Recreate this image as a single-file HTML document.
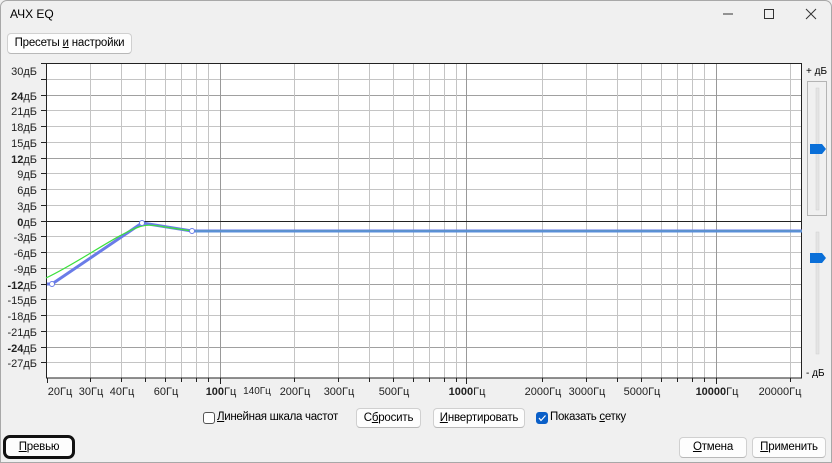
<!DOCTYPE html>
<html><head><meta charset="utf-8"><style>
*{margin:0;padding:0;box-sizing:border-box}
body{width:832px;height:463px;background:#f0f0f0;font-family:"Liberation Sans",sans-serif;font-size:12px;color:#000;position:relative;overflow:hidden}
.win{position:absolute;left:0;top:0;width:832px;height:463px;border:1px solid #a8a8a8;border-radius:7px 7px 0 0;background:#f0f0f0}
.title{position:absolute;left:10px;top:7px;font-size:12px}
.btn{position:absolute;background:#fdfdfd;border:1px solid #d0d0d0;border-bottom-color:#b8b8b8;border-radius:4px;font-size:11.5px;letter-spacing:-0.2px;text-align:center;line-height:18px;white-space:nowrap}
.cb{position:absolute;width:12px;height:12px;border:1px solid #555;border-radius:3px;background:#fff}
.lbl{position:absolute;font-size:11.5px;letter-spacing:-0.3px;white-space:nowrap}
u{text-decoration:underline}
</style></head><body>
<div class="win"></div>
<div class="title">АЧХ EQ</div>
<svg style="position:absolute;left:0;top:0" width="832" height="40">
<line x1="723" y1="14" x2="733" y2="14" stroke="#333" stroke-width="1"/>
<rect x="764.5" y="9.5" width="9" height="9" fill="none" stroke="#333" stroke-width="1"/>
<path d="M806 9 L816 19 M816 9 L806 19" stroke="#333" stroke-width="1"/>
</svg>
<div class="btn" style="left:7px;top:33px;width:125px;height:21px">Пресеты <u>и</u> настройки</div>

<svg style="position:absolute;left:0;top:55px" width="832" height="350" viewBox="0 55 832 350" font-family="Liberation Sans" font-size="11">
<rect x="46" y="63" width="756" height="315" fill="#fff"/>
<g stroke="#c4c4c4" stroke-width="1">
<line x1="46" y1="79.5" x2="802" y2="79.5"/>
<line x1="46" y1="95.5" x2="802" y2="95.5" stroke="#a0a0a0"/>
<line x1="46" y1="110.5" x2="802" y2="110.5"/>
<line x1="46" y1="126.5" x2="802" y2="126.5"/>
<line x1="46" y1="142.5" x2="802" y2="142.5"/>
<line x1="46" y1="158.5" x2="802" y2="158.5" stroke="#a0a0a0"/>
<line x1="46" y1="173.5" x2="802" y2="173.5"/>
<line x1="46" y1="189.5" x2="802" y2="189.5"/>
<line x1="46" y1="205.5" x2="802" y2="205.5"/>
<line x1="46" y1="236.5" x2="802" y2="236.5"/>
<line x1="46" y1="252.5" x2="802" y2="252.5"/>
<line x1="46" y1="268.5" x2="802" y2="268.5"/>
<line x1="46" y1="284.5" x2="802" y2="284.5" stroke="#a0a0a0"/>
<line x1="46" y1="299.5" x2="802" y2="299.5"/>
<line x1="46" y1="315.5" x2="802" y2="315.5"/>
<line x1="46" y1="331.5" x2="802" y2="331.5"/>
<line x1="46" y1="347.5" x2="802" y2="347.5" stroke="#a0a0a0"/>
<line x1="46" y1="362.5" x2="802" y2="362.5"/>
</g>
<g stroke="#c4c4c4" stroke-width="1">
<line x1="90.5" y1="63" x2="90.5" y2="378"/><line x1="121.5" y1="63" x2="121.5" y2="378"/><line x1="145.5" y1="63" x2="145.5" y2="378"/><line x1="165.5" y1="63" x2="165.5" y2="378"/><line x1="181.5" y1="63" x2="181.5" y2="378"/><line x1="196.5" y1="63" x2="196.5" y2="378"/><line x1="208.5" y1="63" x2="208.5" y2="378"/>
<line x1="294.5" y1="63" x2="294.5" y2="378"/><line x1="338.5" y1="63" x2="338.5" y2="378"/><line x1="369.5" y1="63" x2="369.5" y2="378"/><line x1="393.5" y1="63" x2="393.5" y2="378"/><line x1="413.5" y1="63" x2="413.5" y2="378"/><line x1="429.5" y1="63" x2="429.5" y2="378"/><line x1="444.5" y1="63" x2="444.5" y2="378"/><line x1="456.5" y1="63" x2="456.5" y2="378"/>
<line x1="542.5" y1="63" x2="542.5" y2="378"/><line x1="586.5" y1="63" x2="586.5" y2="378"/><line x1="617.5" y1="63" x2="617.5" y2="378"/><line x1="641.5" y1="63" x2="641.5" y2="378"/><line x1="661.5" y1="63" x2="661.5" y2="378"/><line x1="677.5" y1="63" x2="677.5" y2="378"/><line x1="692.5" y1="63" x2="692.5" y2="378"/><line x1="704.5" y1="63" x2="704.5" y2="378"/>
<line x1="790.5" y1="63" x2="790.5" y2="378"/>
</g>
<g stroke="#999" stroke-width="1">
<line x1="220.5" y1="63" x2="220.5" y2="378"/><line x1="466.5" y1="63" x2="466.5" y2="378"/><line x1="716.5" y1="63" x2="716.5" y2="378"/>
</g>
<line x1="46" y1="221.5" x2="802" y2="221.5" stroke="#222"/>
<rect x="46.5" y="63.5" width="755" height="314.5" fill="none" stroke="#222"/>
<g stroke="#222"><line x1="41" y1="63.5" x2="46" y2="63.5"/><line x1="41" y1="79.5" x2="46" y2="79.5"/><line x1="41" y1="95.5" x2="46" y2="95.5"/><line x1="41" y1="110.5" x2="46" y2="110.5"/><line x1="41" y1="126.5" x2="46" y2="126.5"/><line x1="41" y1="142.5" x2="46" y2="142.5"/><line x1="41" y1="158.5" x2="46" y2="158.5"/><line x1="41" y1="173.5" x2="46" y2="173.5"/><line x1="41" y1="189.5" x2="46" y2="189.5"/><line x1="41" y1="205.5" x2="46" y2="205.5"/><line x1="41" y1="221.5" x2="46" y2="221.5"/><line x1="41" y1="236.5" x2="46" y2="236.5"/><line x1="41" y1="252.5" x2="46" y2="252.5"/><line x1="41" y1="268.5" x2="46" y2="268.5"/><line x1="41" y1="284.5" x2="46" y2="284.5"/><line x1="41" y1="299.5" x2="46" y2="299.5"/><line x1="41" y1="315.5" x2="46" y2="315.5"/><line x1="41" y1="331.5" x2="46" y2="331.5"/><line x1="41" y1="347.5" x2="46" y2="347.5"/><line x1="41" y1="362.5" x2="46" y2="362.5"/></g>
<g text-anchor="end" fill="#222">
<text x="37" y="75">30дБ</text>
<text x="37" y="100"><tspan font-weight="bold">24</tspan>дБ</text>
<text x="37" y="115">21дБ</text><text x="37" y="131">18дБ</text><text x="37" y="147">15дБ</text>
<text x="37" y="163"><tspan font-weight="bold">12</tspan>дБ</text>
<text x="37" y="178">9дБ</text><text x="37" y="194">6дБ</text><text x="37" y="210">3дБ</text>
<text x="37" y="226"><tspan font-weight="bold">0</tspan>дБ</text>
<text x="37" y="241">-3дБ</text><text x="37" y="257">-6дБ</text><text x="37" y="273">-9дБ</text>
<text x="37" y="289"><tspan font-weight="bold">-12</tspan>дБ</text>
<text x="37" y="304">-15дБ</text><text x="37" y="320">-18дБ</text><text x="37" y="336">-21дБ</text>
<text x="37" y="352"><tspan font-weight="bold">-24</tspan>дБ</text>
<text x="37" y="367">-27дБ</text>
</g>
<g stroke="#222"><line x1="47.5" y1="378" x2="47.5" y2="383"/><line x1="90.5" y1="378" x2="90.5" y2="382"/><line x1="121.5" y1="378" x2="121.5" y2="382"/><line x1="145.5" y1="378" x2="145.5" y2="382"/><line x1="165.5" y1="378" x2="165.5" y2="382"/><line x1="181.5" y1="378" x2="181.5" y2="382"/><line x1="196.5" y1="378" x2="196.5" y2="382"/><line x1="208.5" y1="378" x2="208.5" y2="382"/><line x1="220.5" y1="378" x2="220.5" y2="384"/><line x1="294.5" y1="378" x2="294.5" y2="382"/><line x1="338.5" y1="378" x2="338.5" y2="382"/><line x1="369.5" y1="378" x2="369.5" y2="382"/><line x1="393.5" y1="378" x2="393.5" y2="382"/><line x1="413.5" y1="378" x2="413.5" y2="382"/><line x1="429.5" y1="378" x2="429.5" y2="382"/><line x1="444.5" y1="378" x2="444.5" y2="382"/><line x1="456.5" y1="378" x2="456.5" y2="382"/><line x1="466.5" y1="378" x2="466.5" y2="384"/><line x1="542.5" y1="378" x2="542.5" y2="382"/><line x1="586.5" y1="378" x2="586.5" y2="382"/><line x1="617.5" y1="378" x2="617.5" y2="382"/><line x1="641.5" y1="378" x2="641.5" y2="382"/><line x1="661.5" y1="378" x2="661.5" y2="382"/><line x1="677.5" y1="378" x2="677.5" y2="382"/><line x1="692.5" y1="378" x2="692.5" y2="382"/><line x1="704.5" y1="378" x2="704.5" y2="382"/><line x1="716.5" y1="378" x2="716.5" y2="384"/><line x1="790.5" y1="378" x2="790.5" y2="382"/></g>
<g fill="#222" text-anchor="middle">
<text x="60" y="395">20Гц</text><text x="91" y="395">30Гц</text><text x="122" y="395">40Гц</text><text x="166" y="395">60Гц</text>
<text x="221" y="395"><tspan font-weight="bold">100</tspan>Гц</text>
<text x="257" y="394" font-size="10">140Гц</text><text x="295" y="395">200Гц</text><text x="339" y="395">300Гц</text><text x="394" y="395">500Гц</text>
<text x="467" y="395"><tspan font-weight="bold">1000</tspan>Гц</text>
<text x="543" y="395">2000Гц</text><text x="587" y="395">3000Гц</text><text x="642" y="395">5000Гц</text>
<text x="717" y="395"><tspan font-weight="bold">10000</tspan>Гц</text>
<text x="780" y="395">20000Гц</text>
</g>
<path d="M47 284 L52 284 L142 223 L192 231 L802 231" fill="none" stroke="#6a7ce8" stroke-width="3"/>
<path d="M46 278 C80 262 120 232 142 226 Q150 224 165 227 L192 231 L802 231" fill="none" stroke="#3ce03c" stroke-width="1.2"/>
<line x1="192" y1="231.5" x2="802" y2="231.5" stroke="#5a8fd8" stroke-width="2"/>
<circle cx="52" cy="284" r="2.5" fill="#fff" stroke="#6a7ce8"/><circle cx="142" cy="223" r="2.5" fill="#fff" stroke="#6a7ce8"/><circle cx="192" cy="231" r="2.5" fill="#fff" stroke="#6a7ce8"/>
<text x="806" y="74" font-size="10">+ дБ</text>
<text x="806" y="376" font-size="10">- дБ</text>
<rect x="807.5" y="81.5" width="19" height="134" fill="none" stroke="#777" stroke-dasharray="1,1"/>
<rect x="816" y="88" width="3" height="122" fill="#e4e4e4" stroke="#d0d0d0" stroke-width="0.5"/>
<rect x="816" y="232" width="3" height="122" fill="#e4e4e4" stroke="#d0d0d0" stroke-width="0.5"/>
<path d="M810 144 L822 144 L826 149 L822 154 L810 154 Z" fill="#0a6fd8"/>
<path d="M810 253 L822 253 L826 258 L822 263 L810 263 Z" fill="#0a6fd8"/>
</svg>

<div class="cb" style="left:203px;top:412px"></div>
<div class="lbl" style="left:217px;top:411px"><u>Л</u>инейная шкала частот</div>
<div class="btn" style="left:356px;top:408px;width:65px;height:20px">С<u>б</u>росить</div>
<div class="btn" style="left:433px;top:408px;width:92px;height:20px"><u>И</u>нвертировать</div>
<div class="cb" style="left:536px;top:412px;background:#0a5fc8;border-color:#0a5fc8"></div>
<svg style="position:absolute;left:536px;top:412px" width="12" height="12"><path d="M3 6 L5 8.5 L9.5 3.5" stroke="#fff" stroke-width="1.2" fill="none"/></svg>
<div class="lbl" style="left:550px;top:411px">Показать <u>с</u>етку</div>
<div class="btn" style="left:3px;top:435px;width:72px;height:24px;border:3px solid #111;border-radius:7px;line-height:18px"><u>П</u>ревью</div>
<div class="btn" style="left:679px;top:437px;width:68px;height:21px"><u>О</u>тмена</div>
<div class="btn" style="left:752px;top:437px;width:74px;height:21px"><u>П</u>рименить</div>
</body></html>
